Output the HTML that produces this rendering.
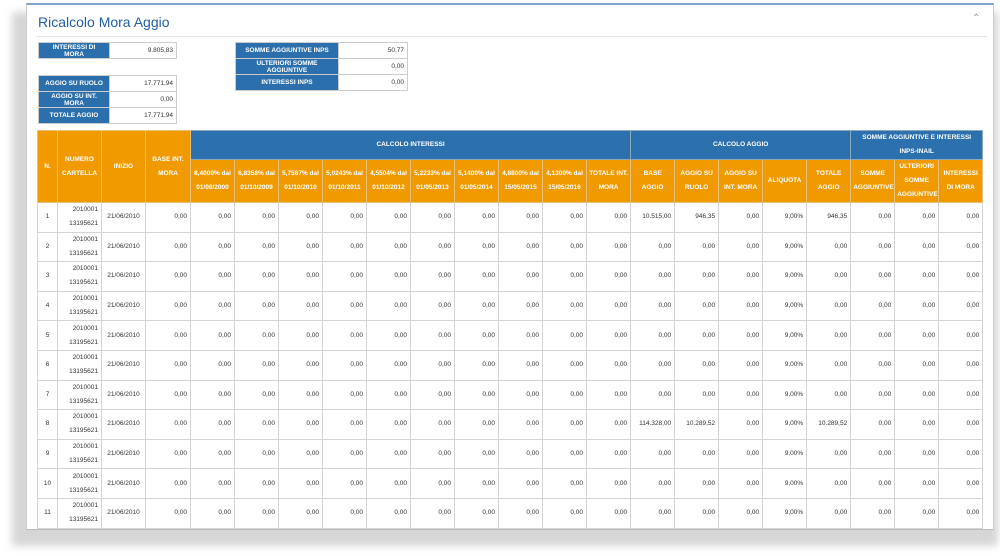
<!DOCTYPE html><html><head><meta charset="utf-8"><style>
*{margin:0;padding:0;box-sizing:border-box}
body{width:1000px;height:556px;background:#fff;position:relative;overflow:hidden;font-family:"Liberation Sans",sans-serif}
.shadow{position:absolute;left:12px;top:12px;width:986px;height:534px;background:#d6d6d6;filter:blur(4px)}
.panel{position:absolute;left:26px;top:3px;width:968px;height:527px;background:#fff;border-top:2px solid #7fa3cc;border-left:1px solid #ccc;border-right:1px solid #ccc;border-bottom:1px solid #bbb;overflow:hidden}
.title{position:absolute;left:11px;top:9px;font-size:14px;color:#1f5fa6}
.hr{position:absolute;left:9px;top:31px;width:951px;border-top:1px solid #e4e4e4}
.chev{position:absolute;left:945px;top:8px;font-size:10px;color:#999}
table{border-collapse:collapse;position:absolute}
.s td{height:16px;font-size:6.5px;border:1px solid #ccc;padding:0 3px}
.s td.l{background:#2c6fad;color:#fff;text-align:center;font-weight:bold}
.s td.v{text-align:right;color:#333}
.m{left:10px;top:125px;table-layout:fixed;width:946px}
.m td{border:1px solid #d4d4d4;font-size:6.5px;text-align:right;padding:0 3px;height:29.6px;color:#333;line-height:14px}
.m td.c{text-align:center}
.m th{font-size:6.5px;color:#fff;font-weight:bold;border:1px solid #e8c07a;line-height:14px;padding:0 2px}
.m th.o{background:#f19a00}
.m th.b{background:#2c70ae;border-color:#8ab}
</style></head><body>
<div class="shadow"></div>
<div class="panel">
<div class="title">Ricalcolo Mora Aggio</div>
<div class="chev">&#8963;</div>
<div class="hr"></div>
<table class="s" style="left:11px;top:37px;width:139px"><tr><td class="l" style="width:71px">INTERESSI DI MORA</td><td class="v">9.805,83</td></tr></table>
<table class="s" style="left:11px;top:70px;width:139px">
<tr><td class="l" style="width:71px">AGGIO SU RUOLO</td><td class="v">17.771,94</td></tr>
<tr><td class="l">AGGIO SU INT. MORA</td><td class="v">0,00</td></tr>
<tr><td class="l">TOTALE AGGIO</td><td class="v">17.771,94</td></tr></table>
<table class="s" style="left:208px;top:37px;width:173px">
<tr><td class="l" style="width:103px">SOMME AGGIUNTIVE INPS</td><td class="v">50,77</td></tr>
<tr><td class="l">ULTERIORI SOMME AGGIUNTIVE</td><td class="v">0,00</td></tr>
<tr><td class="l">INTERESSI INPS</td><td class="v">0,00</td></tr></table>
<table class="m">
<colgroup><col style="width:20px"><col style="width:44px"><col style="width:44px"><col style="width:45px"><col span="18" style="width:44px"></colgroup>
<tr style="height:29px"><th class="o" rowspan="2">N.</th><th class="o" rowspan="2">NUMERO CARTELLA</th><th class="o" rowspan="2">INIZIO</th><th class="o" rowspan="2">BASE INT. MORA</th><th class="b" colspan="10">CALCOLO INTERESSI</th><th class="b" colspan="5">CALCOLO AGGIO</th><th class="b" colspan="3">SOMME AGGIUNTIVE E INTERESSI INPS-INAIL</th></tr>
<tr style="height:42px"><th class="o">8,4000% dal 01/08/2000</th><th class="o">6,8358% dal 01/10/2009</th><th class="o">5,7567% dal 01/10/2010</th><th class="o">5,0243% dal 01/10/2011</th><th class="o">4,5504% dal 01/10/2012</th><th class="o">5,2233% dal 01/05/2013</th><th class="o">5,1400% dal 01/05/2014</th><th class="o">4,8800% dal 15/05/2015</th><th class="o">4,1300% dal 15/05/2016</th><th class="o">TOTALE INT. MORA</th><th class="o">BASE AGGIO</th><th class="o">AGGIO SU RUOLO</th><th class="o">AGGIO SU INT. MORA</th><th class="o">ALIQUOTA</th><th class="o">TOTALE AGGIO</th><th class="o">SOMME AGGIUNTIVE</th><th class="o">ULTERIORI SOMME AGGIUNTIVE</th><th class="o">INTERESSI DI MORA</th></tr>
<tr><td class="c">1</td><td>2010001 13195621</td><td class="c">21/06/2010</td><td>0,00</td><td>0,00</td><td>0,00</td><td>0,00</td><td>0,00</td><td>0,00</td><td>0,00</td><td>0,00</td><td>0,00</td><td>0,00</td><td>0,00</td><td>10.515,00</td><td>946,35</td><td>0,00</td><td>9,00%</td><td>946,35</td><td>0,00</td><td>0,00</td><td>0,00</td></tr>
<tr><td class="c">2</td><td>2010001 13195621</td><td class="c">21/06/2010</td><td>0,00</td><td>0,00</td><td>0,00</td><td>0,00</td><td>0,00</td><td>0,00</td><td>0,00</td><td>0,00</td><td>0,00</td><td>0,00</td><td>0,00</td><td>0,00</td><td>0,00</td><td>0,00</td><td>9,00%</td><td>0,00</td><td>0,00</td><td>0,00</td><td>0,00</td></tr>
<tr><td class="c">3</td><td>2010001 13195621</td><td class="c">21/06/2010</td><td>0,00</td><td>0,00</td><td>0,00</td><td>0,00</td><td>0,00</td><td>0,00</td><td>0,00</td><td>0,00</td><td>0,00</td><td>0,00</td><td>0,00</td><td>0,00</td><td>0,00</td><td>0,00</td><td>9,00%</td><td>0,00</td><td>0,00</td><td>0,00</td><td>0,00</td></tr>
<tr><td class="c">4</td><td>2010001 13195621</td><td class="c">21/06/2010</td><td>0,00</td><td>0,00</td><td>0,00</td><td>0,00</td><td>0,00</td><td>0,00</td><td>0,00</td><td>0,00</td><td>0,00</td><td>0,00</td><td>0,00</td><td>0,00</td><td>0,00</td><td>0,00</td><td>9,00%</td><td>0,00</td><td>0,00</td><td>0,00</td><td>0,00</td></tr>
<tr><td class="c">5</td><td>2010001 13195621</td><td class="c">21/06/2010</td><td>0,00</td><td>0,00</td><td>0,00</td><td>0,00</td><td>0,00</td><td>0,00</td><td>0,00</td><td>0,00</td><td>0,00</td><td>0,00</td><td>0,00</td><td>0,00</td><td>0,00</td><td>0,00</td><td>9,00%</td><td>0,00</td><td>0,00</td><td>0,00</td><td>0,00</td></tr>
<tr><td class="c">6</td><td>2010001 13195621</td><td class="c">21/06/2010</td><td>0,00</td><td>0,00</td><td>0,00</td><td>0,00</td><td>0,00</td><td>0,00</td><td>0,00</td><td>0,00</td><td>0,00</td><td>0,00</td><td>0,00</td><td>0,00</td><td>0,00</td><td>0,00</td><td>9,00%</td><td>0,00</td><td>0,00</td><td>0,00</td><td>0,00</td></tr>
<tr><td class="c">7</td><td>2010001 13195621</td><td class="c">21/06/2010</td><td>0,00</td><td>0,00</td><td>0,00</td><td>0,00</td><td>0,00</td><td>0,00</td><td>0,00</td><td>0,00</td><td>0,00</td><td>0,00</td><td>0,00</td><td>0,00</td><td>0,00</td><td>0,00</td><td>9,00%</td><td>0,00</td><td>0,00</td><td>0,00</td><td>0,00</td></tr>
<tr><td class="c">8</td><td>2010001 13195621</td><td class="c">21/06/2010</td><td>0,00</td><td>0,00</td><td>0,00</td><td>0,00</td><td>0,00</td><td>0,00</td><td>0,00</td><td>0,00</td><td>0,00</td><td>0,00</td><td>0,00</td><td>114.328,00</td><td>10.289,52</td><td>0,00</td><td>9,00%</td><td>10.289,52</td><td>0,00</td><td>0,00</td><td>0,00</td></tr>
<tr><td class="c">9</td><td>2010001 13195621</td><td class="c">21/06/2010</td><td>0,00</td><td>0,00</td><td>0,00</td><td>0,00</td><td>0,00</td><td>0,00</td><td>0,00</td><td>0,00</td><td>0,00</td><td>0,00</td><td>0,00</td><td>0,00</td><td>0,00</td><td>0,00</td><td>9,00%</td><td>0,00</td><td>0,00</td><td>0,00</td><td>0,00</td></tr>
<tr><td class="c">10</td><td>2010001 13195621</td><td class="c">21/06/2010</td><td>0,00</td><td>0,00</td><td>0,00</td><td>0,00</td><td>0,00</td><td>0,00</td><td>0,00</td><td>0,00</td><td>0,00</td><td>0,00</td><td>0,00</td><td>0,00</td><td>0,00</td><td>0,00</td><td>9,00%</td><td>0,00</td><td>0,00</td><td>0,00</td><td>0,00</td></tr>
<tr><td class="c">11</td><td>2010001 13195621</td><td class="c">21/06/2010</td><td>0,00</td><td>0,00</td><td>0,00</td><td>0,00</td><td>0,00</td><td>0,00</td><td>0,00</td><td>0,00</td><td>0,00</td><td>0,00</td><td>0,00</td><td>0,00</td><td>0,00</td><td>0,00</td><td>9,00%</td><td>0,00</td><td>0,00</td><td>0,00</td><td>0,00</td></tr>
<tr><td class="c"></td><td></td><td></td><td></td><td></td><td></td><td></td><td></td><td></td><td></td><td></td><td></td><td></td><td></td><td></td><td></td><td></td><td></td><td></td><td></td><td></td><td></td></tr>
</table>
</div>
</body></html>
